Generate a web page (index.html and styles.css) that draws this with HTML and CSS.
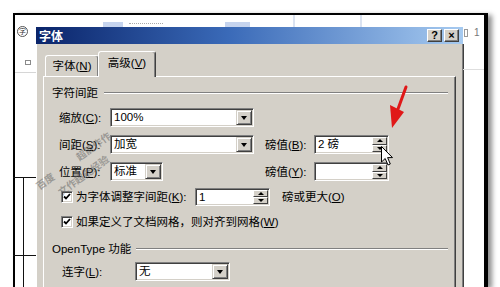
FILE: index.html
```html
<!DOCTYPE html>
<html lang="zh-CN">
<head>
<meta charset="utf-8">
<title>字体</title>
<link rel="stylesheet" href="styles.css">
</head>
<body>
<div class="frame">
  <div class="topstrip">
    <span class="blk b1"></span><span class="faint"></span><span class="blk b2"></span><span class="vl v1"></span><span class="vl v2"></span>
  </div>
  <div class="row">
    <div class="gutter">
      <div class="circ">字</div>
      <div class="sicon"></div>
      <div class="hl"></div>
      <div class="tbl"><div class="tcell"></div></div>
    </div>
    <div class="dialog">
      <div class="titlebar">
        <span class="ttl">字体</span>
        <span class="tbtns"><span class="tbtn">?</span><span class="tbtn">×</span></span>
      </div>
      <div class="dbody">
        <div class="tabs">
          <div class="tab">字体(<u>N</u>)</div>
          <div class="tab active">高级(<u>V</u>)</div>
        </div>
        <div class="panel">
          <div class="sect"><span>字符间距</span><i class="rule"></i></div>
          <div class="grid">
            <span class="lbl">缩放(<u>C</u>):</span>
            <div class="combo w144"><span class="val">100%</span><span class="dd"></span></div>
            <span></span><span></span>

            <span class="lbl">间距(<u>S</u>):</span>
            <div class="combo w144"><span class="val">加宽</span><span class="dd"></span></div>
            <span class="lbl">磅值(<u>B</u>):</span>
            <div class="combo spin"><span class="val">2 磅</span><span class="spb"><i class="up"></i><i class="dn"></i></span></div>

            <span class="lbl">位置(<u>P</u>):</span>
            <div class="combo w53"><span class="val">标准</span><span class="dd"></span></div>
            <span class="lbl">磅值(<u>Y</u>):</span>
            <div class="combo spin"><span class="val"></span><span class="spb"><i class="up"></i><i class="dn"></i></span></div>
          </div>

          <div class="chkrow">
            <span class="cb"><svg width="8" height="8" viewBox="0 0 8 8"><path d="M1 3.5 L3 5.5 L7 1" fill="none" stroke="#000" stroke-width="1.8"/></svg></span>
            <span class="ktext">为字体调整字间距(<u>K</u>):</span>
            <div class="combo spin h18"><span class="val">1</span><span class="spb"><i class="up"></i><i class="dn"></i></span></div>
            <span class="after">磅或更大(<u>O</u>)</span>
          </div>
          <div class="chkrow r2">
            <span class="cb"><svg width="8" height="8" viewBox="0 0 8 8"><path d="M1 3.5 L3 5.5 L7 1" fill="none" stroke="#000" stroke-width="1.8"/></svg></span>
            <span class="ktext2">如果定义了文档网格，则对齐到网格(<u>W</u>)</span>
          </div>

          <div class="sect s2"><span>OpenType 功能</span><i class="rule"></i></div>
          <div class="lrow">
            <span class="lbl lw">连字(<u>L</u>):</span>
            <div class="combo w95"><span class="val">无</span><span class="dd"></span></div>
          </div>
        </div>
      </div>
    </div>
    <div class="rstrip">
      <div class="rtop"><span class="ricon"></span><span class="rnum">1</span></div>
      <div class="rline"></div>
    </div>
  </div>
</div>

<div class="wm">
  <span class="w1">超能作作</span>
  <span class="w2">百度</span>
  <span class="w3">文作超能经验</span>
</div>

<svg class="arrow" width="26" height="48" viewBox="385 84 26 48">
  <path d="M406 87 L398 109" stroke="#e01818" stroke-width="3" stroke-linecap="round" fill="none"/>
  <path d="M390 105 L404 112 L392 128 Z" fill="#e01818"/>
</svg>

<svg class="cursor" width="14" height="21" viewBox="0 0 14 21">
  <path d="M0.5 0.5 L0.5 16 L4.2 12.5 L7 19 L9.3 18 L6.6 11.6 L11.5 11.6 Z" fill="#fff" stroke="#000" stroke-width="1"/>
</svg>
</body>
</html>
```

FILE: styles.css
```css
* { box-sizing: border-box; margin: 0; padding: 0; }
html, body { width: 500px; height: 287px; overflow: hidden; background: #fff; }
body {
  font: 11.5px/14px "Liberation Sans", "Noto Sans CJK SC", sans-serif;
  color: #000;
  padding: 13px 0 0 13px;
  position: relative;
}
u { text-decoration: underline; text-underline-offset: 1px; }

.frame {
  width: 475px;
  height: 274px;
  border: solid #000;
  border-width: 2px 4px 0 2px;
  box-shadow: 4px 2px 5px rgba(0,0,0,.45);
  background: #fff;
  display: flex;
  flex-direction: column;
}

.topstrip { height: 12px; display: flex; align-items: flex-end; }
.blk { height: 5px; background: #c6d4ee; }
.b1 { margin-left: 88px; width: 20px; }
.faint { margin: 0 0 2px 6px; width: 34px; height: 2px; border-top: 1px dotted #aaa; }
.b2 { margin-left: 62px; width: 25px; }
.vl { width: 2px; height: 12px; background: #dbe3f1; }
.v1 { margin-left: 43px; }
.v2 { margin-left: 65px; }

.row { flex: 1; display: flex; min-height: 0; }

.gutter { width: 21px; display: flex; flex-direction: column; }
.circ {
  margin: -1px 0 0 2px;
  width: 11px; height: 11px;
  border: 1px solid #555;
  border-radius: 50%;
  font: 7px/9px "Noto Sans CJK SC", sans-serif;
  text-align: center;
  color: #333;
}
.sicon { margin: 23px 0 0 10px; width: 6px; height: 5px; border: 1px solid #8a8a8a; }
.hl { margin-top: 7px; height: 1px; background: #d6d6d6; }
.tbl {
  margin: 104px 0 0 -2px;
  flex: 1;
  border-top: 1px solid #111;
  background: linear-gradient(#111, #111) 10px 0 / 1px 100% no-repeat;
}
.tcell { height: 78px; border-bottom: 1px solid #111; }

.dialog { width: 427px; display: flex; flex-direction: column; }
.titlebar {
  height: 17px;
  flex: none;
  background: linear-gradient(90deg, #0a246a 0%, #3a6ab8 45%, #a6caf0 100%);
  display: flex;
  align-items: center;
  padding: 0 4px 0 3px;
}
.ttl { color: #fff; font: bold 12px/14px "Noto Sans CJK SC", sans-serif; }
.tbtns { margin-left: auto; display: flex; gap: 2px; }
.tbtn {
  width: 15px; height: 13px;
  background: #d4d0c8;
  border: 1px solid;
  border-color: #fff #404040 #404040 #fff;
  box-shadow: inset -1px -1px #808080;
  font: bold 11px/11px "Liberation Sans", sans-serif;
  text-align: center;
}

.dbody {
  flex: 1;
  min-height: 0;
  overflow: hidden;
  background: #d4d0c8;
  border-left: 1px solid #fff;
  border-right: 1px solid #808080;
  box-shadow: 1px 0 0 #404040;
  padding: 7px 6px 0 6px;
  display: flex;
  flex-direction: column;
}
.tabs { display: flex; align-items: flex-end; padding-left: 2px; height: 25px; flex: none; }
.tab {
  height: 21px;
  width: 54px;
  text-align: center;
  line-height: 20px;
  border: 1px solid;
  border-bottom: none;
  border-color: #fff #404040 transparent #fff;
  border-radius: 3px 3px 0 0;
  box-shadow: inset -1px 0 #808080;
}
.tab.active {
  height: 26px;
  width: 58px;
  line-height: 22px;
  margin: 0 0 -1px -1px;
  background: #d4d0c8;
  position: relative;
  z-index: 1;
}

.panel {
  flex: none;
  height: 230px;
  border: 1px solid;
  border-color: #fff #404040 #404040 #fff;
  box-shadow: inset -1px -1px #808080;
  padding: 9px 7px 0 8px;
}
.sect { display: flex; align-items: center; gap: 6px; height: 14px; }
.rule { flex: 1; height: 2px; border-top: 1px solid #808080; border-bottom: 1px solid #fff; }

.grid {
  margin: 8px 0 0 7px;
  display: grid;
  grid-template-columns: 51px 155px 49px 75px;
  grid-auto-rows: 19px;
  row-gap: 8px;
  align-items: center;
}
.combo {
  height: 19px;
  display: flex;
  background: #fff;
  border: 1px solid;
  border-color: #808080 #fff #fff #808080;
  box-shadow: inset 1px 1px #404040, inset -1px -1px #d4d0c8;
  padding: 1px;
}
.w144 { width: 144px; }
.w53 { width: 53px; }
.w95 { width: 95px; }
.spin { width: 75px; }
.h18 { height: 18px; }
.val { flex: 1; padding-left: 2px; line-height: 15px; white-space: nowrap; }
.dd {
  width: 16px;
  background: #d4d0c8;
  border: 1px solid;
  border-color: #d4d0c8 #404040 #404040 #d4d0c8;
  box-shadow: inset 1px 1px #fff, inset -1px -1px #808080;
  display: flex;
  align-items: center;
  justify-content: center;
}
.dd::after {
  content: "";
  border-left: 3.5px solid transparent;
  border-right: 3.5px solid transparent;
  border-top: 4px solid #000;
}
.spb { width: 15px; display: flex; flex-direction: column; }
.spb i {
  flex: 1;
  background: #d4d0c8;
  border: 1px solid;
  border-color: #fff #404040 #404040 #fff;
  display: flex;
  align-items: center;
  justify-content: center;
}
.spb .up::after {
  content: "";
  border-left: 3.5px solid transparent;
  border-right: 3.5px solid transparent;
  border-bottom: 3px solid #000;
}
.spb .dn::after {
  content: "";
  border-left: 3.5px solid transparent;
  border-right: 3.5px solid transparent;
  border-top: 3px solid #000;
}

.chkrow { display: flex; align-items: center; height: 18px; margin: 7px 0 0 9px; }
.chkrow.r2 { margin-top: 7px; }
.cb {
  width: 12px; height: 12px;
  background: #fff;
  border: 1px solid;
  border-color: #808080 #fff #fff #808080;
  box-shadow: inset 1px 1px #404040, inset -1px -1px #d4d0c8;
  display: flex;
  align-items: center;
  justify-content: center;
}
.ktext { margin-left: 3px; width: 119px; white-space: nowrap; }
.ktext2 { margin-left: 3px; white-space: nowrap; }
.after { margin-left: 12px; }

.sect.s2 { margin-top: 11px; }
.s2 .rule { margin-left: -1px; }
.lrow { display: flex; align-items: center; margin: 6px 0 0 10px; }
.lw { width: 73px; }

.rstrip { flex: 1; display: flex; flex-direction: column; }
.rtop { height: 12px; display: flex; align-items: center; }
.ricon { margin-left: 1px; width: 4px; height: 8px; border: 1px solid #9a9a9a; }
.rnum { margin-left: 6px; font: 10px/12px "Liberation Sans", sans-serif; color: #777; }
.rline { margin-top: 30px; height: 1px; background: #dedede; }

.wm { position: absolute; left: 0; top: 0; pointer-events: none; }
.wm span {
  position: absolute;
  font: bold 10px/11px "Noto Sans CJK SC", sans-serif;
  color: rgba(95, 95, 95, .5);
  transform-origin: 0 100%;
  transform: rotate(-36deg);
  white-space: nowrap;
}
.w1 { left: 80px; top: 151px; font-size: 10.5px; }
.w2 { left: 40px; top: 180px; font-size: 11px; }
.w3 { left: 62px; top: 186px; }

.arrow { position: absolute; left: 385px; top: 84px; }
.cursor { position: absolute; left: 381px; top: 146px; }
```
